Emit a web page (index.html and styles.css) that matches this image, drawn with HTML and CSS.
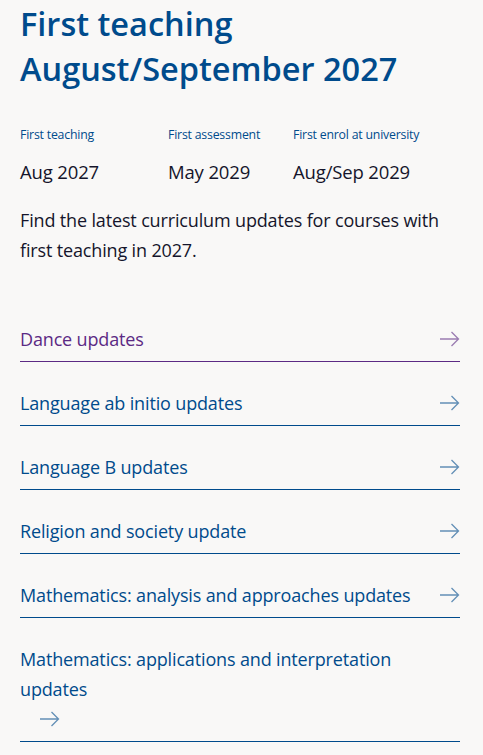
FILE: index.html
```html
<!DOCTYPE html>
<html lang="en">
<head>
    <meta charset="UTF-8">
    <meta name="viewport" content="width=device-width, initial-scale=1.0">
    <title>First teaching August/September 2027</title>
    <link rel="stylesheet" href="styles.css">
</head>
<body>
    <div class="container">
        <h1>First teaching August/September 2027</h1>
        <div class="dates">
            <div class="date-col">
                <span class="date-label">First teaching</span>
                <span class="date-value">Aug 2027</span>
            </div>
            <div class="date-col">
                <span class="date-label">First assessment</span>
                <span class="date-value">May 2029</span>
            </div>
            <div class="date-col">
                <span class="date-label">First enrol at university</span>
                <span class="date-value">Aug/Sep 2029</span>
            </div>
        </div>
        <p class="intro">Find the latest curriculum updates for courses with first teaching in 2027.</p>
        <ul class="links">
            <li><a href="#" class="link visited"><span class="link-text">Dance updates</span><span class="arrow"><svg width="20" height="16" viewBox="0 0 20 16"><path d="M0 8h18.5M11.5 1l7 7-7 7" fill="none" stroke="currentColor" stroke-width="1.3"/></svg></span></a></li>
            <li><a href="#" class="link"><span class="link-text">Language ab initio updates</span><span class="arrow"><svg width="20" height="16" viewBox="0 0 20 16"><path d="M0 8h18.5M11.5 1l7 7-7 7" fill="none" stroke="currentColor" stroke-width="1.3"/></svg></span></a></li>
            <li><a href="#" class="link"><span class="link-text">Language B updates</span><span class="arrow"><svg width="20" height="16" viewBox="0 0 20 16"><path d="M0 8h18.5M11.5 1l7 7-7 7" fill="none" stroke="currentColor" stroke-width="1.3"/></svg></span></a></li>
            <li><a href="#" class="link"><span class="link-text">Religion and society update</span><span class="arrow"><svg width="20" height="16" viewBox="0 0 20 16"><path d="M0 8h18.5M11.5 1l7 7-7 7" fill="none" stroke="currentColor" stroke-width="1.3"/></svg></span></a></li>
            <li><a href="#" class="link"><span class="link-text">Mathematics: analysis and approaches updates</span><span class="arrow"><svg width="20" height="16" viewBox="0 0 20 16"><path d="M0 8h18.5M11.5 1l7 7-7 7" fill="none" stroke="currentColor" stroke-width="1.3"/></svg></span></a></li>
            <li><a href="#" class="link"><span class="link-text">Mathematics: applications and interpretation updates</span><span class="arrow"><svg width="20" height="16" viewBox="0 0 20 16"><path d="M0 8h18.5M11.5 1l7 7-7 7" fill="none" stroke="currentColor" stroke-width="1.3"/></svg></span></a></li>
        </ul>
    </div>
</body>
</html>
```

FILE: styles.css
```css
body {
    font-family: "Open Sans", Arial, sans-serif;
    background-color: #f9f8f7;
    color: #15152b;
    margin: 0;
    padding: 0;
}
.container {
    padding: 0 23px 0 20px;
}
h1 {
    font-size: 32.5px;
    font-weight: 600;
    line-height: 45px;
    color: #004b8c;
    margin: 0;
    padding-top: 1px;
}
.dates {
    display: flex;
    margin-top: 35px;
}
.date-col {
    display: flex;
    flex-direction: column;
}
.date-col:nth-child(1) {
    width: 148px;
}
.date-col:nth-child(2) {
    width: 125px;
}
.date-label {
    font-size: 12.3px;
    line-height: 18px;
    color: #004b8c;
    letter-spacing: -0.2px;
}
.date-value {
    font-size: 18.5px;
    line-height: 24px;
    margin-top: 16px;
    letter-spacing: -0.15px;
}
.intro {
    font-size: 18px;
    line-height: 30px;
    margin: 21px 0 0;
    letter-spacing: -0.15px;
}
.links {
    list-style: none;
    margin: 59px 0 0;
    padding: 0;
}
.link {
    display: flex;
    flex-wrap: wrap;
    justify-content: space-between;
    align-items: center;
    color: #004b8c;
    text-decoration: none;
    font-size: 18px;
    line-height: 30px;
    letter-spacing: -0.15px;
    padding: 0 0 7px;
    margin-top: 26px;
    border-bottom: 1px solid #004b8c;
}
.links li:first-child .link {
    margin-top: 0;
}
.link.visited {
    color: #5c2a84;
    border-bottom-color: #5c2a84;
}
.arrow {
    display: flex;
    align-items: center;
    height: 30px;
    margin-left: 20px;
    opacity: 0.6;
}
```
